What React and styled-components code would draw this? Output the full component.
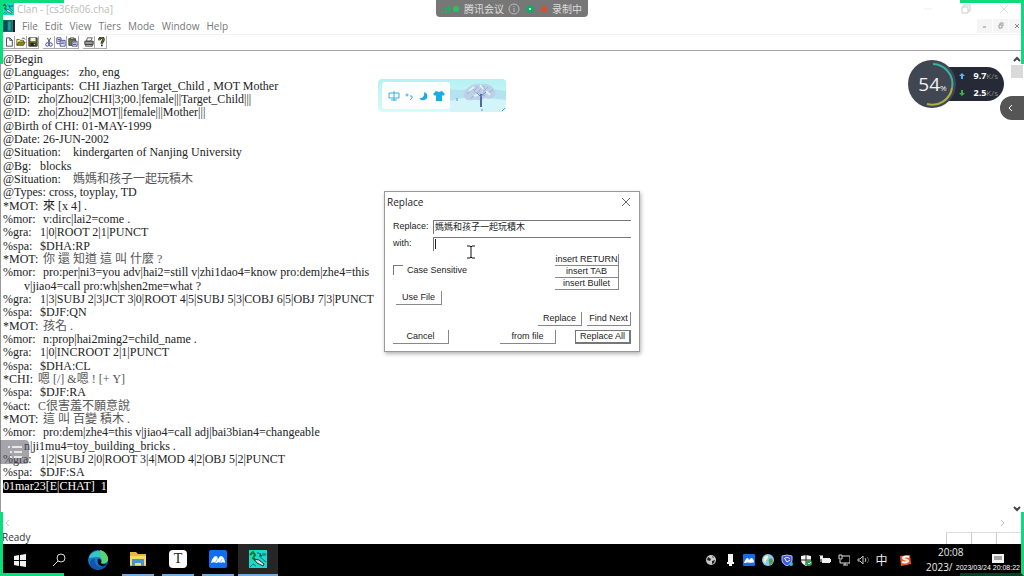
import React, { useState } from "react";
import styled, { createGlobalStyle } from "styled-components";

const GlobalStyle = createGlobalStyle`
  * {
    box-sizing: border-box;
  }
  body {
    margin: 0;
    background: #fff;
    font-family: "Open Sans", "Noto Sans CJK SC", sans-serif;
  }
  button, input {
    font: inherit;
    color: inherit;
    border: none;
    border-radius: 0;
    background: none;
    padding: 0;
    margin: 0;
    outline: none;
  }
`;

const menus = ["File", "Edit", "View", "Tiers", "Mode", "Window", "Help"];

// tab: width of the tag column, cont: continuation of the line above
const lines = [
  { tag: "@Begin" },
  { tag: "@Languages:", tab: 76, text: "zho, eng" },
  { tag: "@Participants:", tab: 76, text: "CHI Jiazhen Target_Child , MOT Mother" },
  { tag: "@ID:", tab: 35, text: "zho|Zhou2|CHI|3;00.|female|||Target_Child|||" },
  { tag: "@ID:", tab: 35, text: "zho|Zhou2|MOT||female|||Mother|||" },
  { tag: "@Birth of CHI:", tab: 79, text: "01-MAY-1999" },
  { tag: "@Date:", tab: 40, text: "26-JUN-2002" },
  { tag: "@Situation:", tab: 70, text: "kindergarten of Nanjing University" },
  { tag: "@Bg:", tab: 37, text: "blocks" },
  { tag: "@Situation:", tab: 70, text: "媽媽和孩子一起玩積木", zh: true },
  { tag: "@Types:", tab: 46, text: "cross, toyplay, TD" },
  { tag: "*MOT:", tab: 40, text: "來 [x 4] ." },
  { tag: "%mor:", tab: 40, text: "v:dirc|lai2=come ." },
  { tag: "%gra:", tab: 37, text: "1|0|ROOT 2|1|PUNCT" },
  { tag: "%spa:", tab: 37, text: "$DHA:RP" },
  { tag: "*MOT:", tab: 40, text: "你 還 知道 這 叫 什麼 ?", zh: true },
  { tag: "%mor:", tab: 40, text: "pro:per|ni3=you adv|hai2=still v|zhi1dao4=know pro:dem|zhe4=this" },
  { cont: true, text: "v|jiao4=call pro:wh|shen2me=what ?" },
  { tag: "%gra:", tab: 37, text: "1|3|SUBJ 2|3|JCT 3|0|ROOT 4|5|SUBJ 5|3|COBJ 6|5|OBJ 7|3|PUNCT" },
  { tag: "%spa:", tab: 37, text: "$DJF:QN" },
  { tag: "*MOT:", tab: 40, text: "孩名 .", zh: true },
  { tag: "%mor:", tab: 40, text: "n:prop|hai2ming2=child_name ." },
  { tag: "%gra:", tab: 37, text: "1|0|INCROOT 2|1|PUNCT" },
  { tag: "%spa:", tab: 37, text: "$DHA:CL" },
  { tag: "*CHI:", tab: 35, text: "嗯 [/] &嗯 ! [+ Y]", zh: true },
  { tag: "%spa:", tab: 37, text: "$DJF:RA" },
  { tag: "%act:", tab: 35, text: "C很害羞不願意說", zh: true },
  { tag: "*MOT:", tab: 40, text: "這 叫 百變 積木 .", zh: true },
  { tag: "%mor:", tab: 40, text: "pro:dem|zhe4=this v|jiao4=call adj|bai3bian4=changeable" },
  { cont: true, text: "n|ji1mu4=toy_building_bricks ." },
  { tag: "%gra:", tab: 37, text: "1|2|SUBJ 2|0|ROOT 3|4|MOD 4|2|OBJ 5|2|PUNCT" },
  { tag: "%spa:", tab: 37, text: "$DJF:SA" },
];

const toolGroups = [
  [
    ["New", <path key="a" d="M3 1h4l3 3v7H3zM7 1v3h3" fill="#fff" stroke="#333" />],
    ["Open", (
      <g key="b">
        <path d="M1 10V3h3l1 1h4v2" fill="#fff3a0" stroke="#5d5a10" />
        <path d="M1 10l2-4h8l-2 4z" fill="#8a8a20" stroke="#4c4c10" />
        <path d="M7 2c1-1 3-1 4 1" fill="none" stroke="#333" />
      </g>
    )],
    ["Save", (
      <g key="c">
        <path d="M1 1h10v10H1z" fill="#6b6b1e" stroke="#222" />
        <path d="M3 1h6v4H3z" fill="#f2f2f2" />
        <path d="M3 7h6v4H3z" fill="#222" />
        <path d="M7 8h1v2H7z" fill="#fff" />
      </g>
    )],
  ],
  [
    ["Cut", (
      <g key="d" fill="none">
        <path d="M4 1l3 6M8 1L5 7" stroke="#333" />
        <circle cx="4" cy="9" r="2" stroke="#25258c" />
        <circle cx="8" cy="9" r="2" stroke="#25258c" />
      </g>
    )],
    ["Copy", (
      <g key="e" fill="#fff" stroke="#34348c">
        <path d="M1 1h5v7H1zM2 3h3M2 5h3" />
        <path d="M5 4h6v7H5zM6 6h4M6 8h4" />
      </g>
    )],
    ["Paste", (
      <g key="f">
        <path d="M1 2h8v8H1z" fill="#77773c" stroke="#333" />
        <path d="M3 1h4v2H3z" fill="#ddd" stroke="#444" />
        <path d="M5 5h6v6H5zM6 7h4M6 9h4" fill="#fff" stroke="#34348c" />
      </g>
    )],
  ],
  [
    ["Print", (
      <g key="g">
        <path d="M4 1h6L8 5H3z" fill="#fff" stroke="#444" />
        <path d="M1 5h10v4H1z" fill="#999" stroke="#222" />
        <path d="M2 9h8v2H2z" fill="#ddd" stroke="#333" />
      </g>
    )],
    ["About", (
      <g key="h" fill="none">
        <path d="M4 4c0-4 5-4 5-1 0 2-2 2-2 5" stroke="#222" strokeWidth="3" />
        <path d="M4 4c0-4 5-4 5-1 0 2-2 2-2 5" stroke="#a8a820" />
        <path d="M6 9h2v2H6z" fill="#222" />
      </g>
    )],
  ],
];

const Svg = ({ size = 12, box = size, children, label }) => (
  <svg width={size} height={size} viewBox={`0 0 ${box} ${box}`} aria-label={label} aria-hidden={!label}>
    {children}
  </svg>
);

const MeetingMark = ({ size }) => (
  <Svg size={size} box={18}>
    <rect width="18" height="18" rx="2" fill="#0f6ff0" />
    <path d="M2 13c1-4 3-7 5-7 1 0 2 2 2 3 1-2 2-3 3-3 2 0 4 3 4 7-2-1-3-1-4 0-2-1-3-1-4 0-2-1-4-1-6 0z" fill="#fff" />
    <path d="M6 13l3-5M11 13l2-4" stroke="#8fc3ff" fill="none" />
  </Svg>
);

const ClanMark = ({ size }) => (
  <Svg size={size} box={18}>
    <rect width="18" height="18" fill="#17dccb" />
    <path d="M1 5l3-3 2 3-2 3 3 3" fill="none" stroke="#0c7a2a" strokeWidth="2" />
    <path d="M8 3h2M11 3v3h2M14 3v3M16 6V3" stroke="#075c60" />
    <path d="M5 9l5 1 5 4-1 2-6-3z" fill="#d9e4e2" stroke="#19393c" />
    <path d="M1 17l3-3 3 2M10 6l7 6" stroke="#0b6a70" fill="none" />
  </Svg>
);

const tray = [
  ["Network globe", (
    <g key="1">
      <circle cx="6" cy="6" r="5" fill="#c9c9c9" />
      <path d="M3 3l3 2-1 2-3-1zM7 7l3-1-1 3-2 1zM7 2l2 1-1 1z" fill="#222" />
    </g>
  )],
  ["Microphone", <path key="2" d="M4 0h5v8H4zM3 8h7v2H8v2H5v-2H3z" fill="#f4f4f4" />],
  ["Meeting", (
    <g key="3">
      <rect width="12" height="12" rx="1" fill="#0f6ff0" />
      <path d="M1 9c1-3 2-5 4-5l1 2 2-2c2 0 3 2 3 5-2-1-3 0-4 0-2-1-3 0-6 0z" fill="#fff" />
    </g>
  )],
  ["Browser", (
    <g key="4">
      <circle cx="6" cy="6" r="6" fill="#8fc7e8" />
      <path d="M2 3c3-3 5-1 4 1s-3 2-2 5C1 9 1 5 2 3z" fill="#e8f3d8" />
      <path d="M7 5c3-1 4 0 4 2s-2 4-4 4c1-2-1-4 0-6z" fill="#4f9c55" />
    </g>
  )],
  ["Manager", (
    <g key="5">
      <path d="M1 2l5-1 5 1v4c0 3-2 4-5 6-3-2-5-3-5-6z" fill="#3d55e0" stroke="#b9c4ff" />
      <path d="M3 5c1-2 5-2 6 0M4 5l2 3 3-2" stroke="#fff" fill="none" />
      <circle cx="10" cy="10" r="2" fill="#38b8d8" />
    </g>
  )],
  ["Security", (
    <g key="6">
      <path d="M1 2l5-1 5 1v4c0 3-2 4-5 6-3-2-5-3-5-6z" fill="#f4f4f4" />
      <path d="M6 1v10M1 6h10" stroke="#222" />
      <circle cx="9" cy="9" r="3" fill="#28a14a" />
      <path d="M8 9l1 1 2-2" stroke="#fff" fill="none" />
    </g>
  )],
  ["Battery", (
    <g key="7">
      <path d="M3 4h8v5H3z" fill="#eee" />
      <path d="M11 5h1v3h-1zM1 2h3v3H1z" fill="#eee" />
      <path d="M1 1v1M3 1v1M2 5v3" stroke="#eee" />
    </g>
  )],
  ["Display", (
    <g key="8" fill="none" stroke="#ddd">
      <path d="M4 2h8v7H2V6M5 11h5M7 9v2" />
      <path d="M1 1h3v4H1z" />
    </g>
  )],
  ["Volume", (
    <g key="9" fill="none" stroke="#ccc">
      <path d="M1 5h2l3-3v8L3 7H1z" />
      <path d="M8 4c1 1 1 3 0 4" />
      <path d="M10 3c2 2 2 4 0 6" stroke="#666" />
    </g>
  )],
];

const App = () => {
  const [find, setFind] = useState("媽媽和孩子一起玩積木");
  const [replacement, setReplacement] = useState("");
  const [caseSensitive, setCaseSensitive] = useState(false);

  return (
    <Screen>
      <GlobalStyle />
      <TitleBar>
        <ClanMark size={12} />
        <Title>Clan - [cs36fa06.cha]</Title>
        <WindowBtns>
          <button aria-label="Minimize"><Svg size={10}><path d="M1 5h8" stroke="#eee" /></Svg></button>
          <button aria-label="Restore"><Svg size={10}><path d="M1 3h6v6H1zM3 3V1h6v6H7" fill="none" stroke="#ccc" /></Svg></button>
          <button aria-label="Close"><Svg size={10}><path d="M1 1l8 8M9 1L1 9" stroke="#ddd" /></Svg></button>
        </WindowBtns>
      </TitleBar>
      <MenuBar>
        <Svg size={12} box={14}>
          <path d="M0 0h11v14H0z" fill="#0d6f70" />
          <path d="M1 1h4v12H1z" fill="#0a4a52" />
          <path d="M6 2h3v10H6z" fill="#2b9c98" />
          <path d="M11 0h3v14h-3z" fill="#17232b" />
        </Svg>
        {menus.map((name) => (
          <MenuItem key={name}>{name}</MenuItem>
        ))}
        <ChildBtns>
          <button aria-label="Minimize document"><Svg size={8}><path d="M2 5h3" stroke="#888" /></Svg></button>
          <button aria-label="Restore document"><Svg size={8}><path d="M2 3h3v3H2zM3 3V1h3v3" fill="none" stroke="#999" /></Svg></button>
          <button aria-label="Close document"><Svg size={8}><path d="M2 2l4 4M6 2L2 6" stroke="#888" /></Svg></button>
        </ChildBtns>
      </MenuBar>
      <ToolBar>
        {toolGroups.map((group, i) => (
          <ToolGroup key={i}>
            {group.map(([label, icon]) => (
              <ToolBtn key={label} aria-label={label}>
                <Svg size={10} box={12}>{icon}</Svg>
              </ToolBtn>
            ))}
          </ToolGroup>
        ))}
      </ToolBar>

      <Editor>
        <Document role="textbox" aria-label="Transcript" aria-multiline="true">
          {lines.map((line, i) => (
            <Line key={i} $cont={line.cont}>
              {line.tag && <Tag $tab={line.tab}>{line.tag}</Tag>}
              {line.text && <Text $zh={line.zh}>{line.text}</Text>}
            </Line>
          ))}
          <Line>
            <Mode>01mar23[E|CHAT]{"  "}1</Mode>
          </Line>
        </Document>
        <ScrollBar>
          <button aria-label="Scroll up"><Svg size={8}><path d="M1 6l3-3 3 3" fill="none" stroke="#444" strokeWidth="2" /></Svg></button>
          <Thumb />
          <button aria-label="Scroll down"><Svg size={8}><path d="M1 2l3 3 3-3" fill="none" stroke="#444" strokeWidth="2" /></Svg></button>
        </ScrollBar>
      </Editor>
      <HScroll>
        <button aria-label="Scroll left"><Svg size={8}><path d="M5 1L2 4l3 3" fill="none" stroke="#ccc" /></Svg></button>
        <button aria-label="Scroll right"><Svg size={8}><path d="M3 1l3 3-3 3" fill="none" stroke="#bbb" /></Svg></button>
      </HScroll>
      <StatusBar>
        <span>Ready</span>
        <Panes>
          <i />
          <i />
          <i />
        </Panes>
      </StatusBar>

      <TaskBar>
        <TaskBtn $narrow aria-label="Start">
          <Svg size={14}><path d="M1 3l5-1v5H1zM7 2l6-1v6H7zM1 8h5v5l-5-1zM7 8h6v6l-6-1z" fill="#f2f2f2" /></Svg>
        </TaskBtn>
        <TaskBtn $narrow aria-label="Search">
          <Svg size={14}><circle cx="9" cy="5" r="4" fill="none" stroke="#ddd" /><path d="M6 8l-5 5" stroke="#ddd" /></Svg>
        </TaskBtn>
        <TaskBtn aria-label="Edge">
          <Svg size={20}>
            <circle cx="10" cy="10" r="10" fill="#1678cf" />
            <path d="M1 8C3-1 18-2 20 9c0 4-4 5-7 4 2-3 0-6-4-6-3 0-6 1-8 1z" fill="#37c6c0" />
            <path d="M12 0c5 1 8 5 8 9 0 4-4 5-7 4 2-2 1-4 0-5z" fill="#5ad46c" />
            <path d="M7 9c-1 5 3 9 10 8-4 4-12 4-15-2-1-5 3-7 5-6z" fill="#1156a8" />
            <path d="M10 9c2-1 4 2 3 4 2 2 5 1 6 0-1 3-4 4-6 3-3-1-4-4-3-7z" fill="#061018" />
          </Svg>
        </TaskBtn>
        <TaskBtn $open aria-label="File Explorer">
          <Svg size={18}>
            <path d="M1 2h6l2 2h8v12H1z" fill="#e9b93a" />
            <path d="M1 6h16v9H1z" fill="#f9d96c" />
            <path d="M3 16V9h12v7h-3v-3H6v3z" fill="#4a93cf" />
          </Svg>
        </TaskBtn>
        <TaskBtn $open aria-label="Typora"><Typora>T</Typora></TaskBtn>
        <TaskBtn $open aria-label="Meeting"><MeetingMark size={18} /></TaskBtn>
        <TaskBtn $active aria-label="Clan"><ClanMark size={18} /></TaskBtn>
        <Tray>
          {tray.map(([label, icon]) => (
            <TrayBtn key={label} aria-label={label}><Svg size={12}>{icon}</Svg></TrayBtn>
          ))}
          <TrayBtn>中</TrayBtn>
          <TrayBtn $wide aria-label="Sogou">
            <Svg size={12}>
              <path d="M1 2l10-1 1 9-10 2z" fill="#ee5a24" />
              <path d="M10 3C7 2 4 3 4 4c0 2 5 1 5 3 0 1-3 2-6 1" fill="none" stroke="#fff" strokeWidth="2" />
            </Svg>
          </TrayBtn>
          <Clock>
            <Time>20:08</Time>
            <span>2023/</span>
          </Clock>
          <TrayBtn $wide aria-label="Notifications">
            <Svg size={14}><path d="M1 1h12v9h-2v3l-3-3H1z" fill="#f4f4f4" /><path d="M3 4h8M3 6h8" stroke="#555" /></Svg>
          </TrayBtn>
        </Tray>
      </TaskBar>

      <Dialog role="dialog" aria-label="Replace">
        <DialogHead>
          <span>Replace</span>
          <button aria-label="Close dialog"><Svg size={10}><path d="M1 1l8 8M9 1L1 9" stroke="#666" /></Svg></button>
        </DialogHead>
        <DialogBody>
          <Field>
            <label htmlFor="find">Replace:</label>
            <input id="find" value={find} onChange={(e) => setFind(e.target.value)} />
          </Field>
          <Field>
            <label htmlFor="with">with:</label>
            <Caret />
            <input id="with" value={replacement} onChange={(e) => setReplacement(e.target.value)} />
          </Field>
          <Options>
            <Check>
              <input
                type="checkbox"
                checked={caseSensitive}
                onChange={(e) => setCaseSensitive(e.target.checked)}
              />
              Case Sensitive
            </Check>
            <DialogBtn $w={46}>Use File</DialogBtn>
            <Inserts>
              <DialogBtn $w={64} $flat>insert RETURN</DialogBtn>
              <DialogBtn $w={64} $flat>insert TAB</DialogBtn>
              <DialogBtn $w={64} $flat>insert Bullet</DialogBtn>
            </Inserts>
          </Options>
          <Actions>
            <DialogBtn $w={44}>Replace</DialogBtn>
            <DialogBtn $w={44}>Find Next</DialogBtn>
          </Actions>
          <Actions $spread>
            <DialogBtn $w={56}>Cancel</DialogBtn>
            <DialogBtn $w={56}>from file</DialogBtn>
            <DialogBtn $w={56} $primary>Replace All</DialogBtn>
          </Actions>
        </DialogBody>
      </Dialog>
      <Pointer>
        <Svg size={14}><path d="M3 1h3l1 1 1-1h3M7 2v10M3 13h3l1-1 1 1h3" fill="none" stroke="#111" /></Svg>
      </Pointer>

      <MeetingBar>
        <Svg size={20}>
          <path d="M2 12h2v2H2zM5 9h2v5H5zM8 6h2v8H8z" fill="#20b05a" />
          <circle cx="16" cy="10" r="3" fill="#20c85c" />
        </Svg>
        <span>腾讯会议</span>
        <Svg size={12}><circle cx="6" cy="6" r="5" fill="none" stroke="#bbb" /><path d="M6 3v1M6 5v4" stroke="#bbb" /></Svg>
        <Svg size={12}><circle cx="6" cy="6" r="4" fill="#17a768" /><circle cx="6" cy="6" r="1" fill="#fff" /></Svg>
        <Svg size={8}><circle cx="4" cy="4" r="3" fill="#e2492f" /></Svg>
        <span>录制中</span>
      </MeetingBar>

      <ImeBar>
        <ImeTools>
          <Svg size={12}><path d="M1 3h10v5H1zM6 1v10M3 10h6" fill="none" stroke="#2cb5df" /></Svg>
          <Svg size={8}><circle cx="2" cy="3" r="1" fill="none" stroke="#2cb5df" /><path d="M5 4h2v2L5 8" fill="none" stroke="#2cb5df" /></Svg>
          <Svg size={10}><path d="M6 1c3 1 4 3 3 6-2 3-6 3-8 0 3 1 6-2 5-6z" fill="#1bade0" /></Svg>
          <Svg size={12}><path d="M3 1l3 1 3-1 3 3-2 2-1-1v6H3V5L2 6 0 4z" fill="#1bade0" /></Svg>
        </ImeTools>
        <svg width="56" height="33" viewBox="0 0 56 33" aria-hidden="true">
          <path d="M0 10l10 1 20-3 26 4v12H0z" fill="#b4e2ef" />
          <path d="M0 22c14-5 34-4 56-1v12H0z" fill="#d3f4f8" />
          <path d="M14 16c1-7 9-12 17-11 9-1 14 4 14 9 1 5-5 7-10 5-5 4-11 1-12 2-6 1-9-1-9-5z" fill="#bcd0e6" />
          <path d="M17 15l6-5 4 5 6-8 5 7 5-3M21 19l7-5 7 3M28 7l-4 5M38 8l-5 5" stroke="#9db5d6" fill="none" />
          <path d="M19 12l5-4M24 17l5-2M36 12l4 4M30 6l3 4" stroke="#e6f0f8" strokeWidth="2" fill="none" />
          <path d="M31 15v13" stroke="#506aa8" strokeWidth="2" fill="none" />
          <path d="M31 18l-4-4M31 17l5-4" stroke="#6f8abd" fill="none" />
          <path d="M7 22v-3M31 31h2M52 32l3-3" stroke="#6c8fc0" fill="none" />
        </svg>
      </ImeBar>

      <NetWidget>
        <Gauge>
          <b>54</b>
          <small>%</small>
          <svg width="48" height="48" viewBox="0 0 48 48" aria-hidden="true">
            <path d="M25 4a20 20 0 0 1 19 24" fill="none" stroke="#37b3a0" strokeWidth="2" />
            <path d="M44 28a20 20 0 0 1-25 16" fill="none" stroke="#a9b24a" strokeWidth="2" />
          </svg>
        </Gauge>
        <Speeds>
          <Speed><Svg size={8}><path d="M4 1l3 3H5v3H3V4H1z" fill="#58b4f0" /></Svg><b>9.7</b><span>K/s</span></Speed>
          <Speed><Svg size={8}><path d="M4 7L1 4h2V1h2v3h2z" fill="#3fae49" /></Svg><b>2.5</b><span>K/s</span></Speed>
        </Speeds>
      </NetWidget>
      <Handle aria-label="Expand panel"><Svg size={10}><path d="M6 2L3 5l3 3" fill="none" stroke="#fff" /></Svg></Handle>
      <ListBtn aria-label="Outline">
        <Svg size={16}><path d="M1 3h2M5 3h10M3 8h2M7 8h8M3 13h2M7 13h8" stroke="#e8e8e8" strokeWidth="2" /></Svg>
      </ListBtn>

      <Corner $top $left />
      <Corner $top />
      <Corner $left />
      <Corner $dim />
      <Stamp>2023/03/24 20:08:22</Stamp>
    </Screen>
  );
};

export default App;

const Screen = styled.div`
  position: relative;
  display: flex;
  flex-direction: column;
  min-height: 100vh;
  overflow: hidden;
  background: #fff;
`;

const TitleBar = styled.header`
  display: flex;
  align-items: center;
  gap: 3px;
  height: 18px;
  padding: 0 15px 0 2px;
`;
const Title = styled.span`
  font-size: 10px;
  color: #bbb;
`;
const WindowBtns = styled.div`
  display: flex;
  gap: 28px;
  margin-left: auto;

  button {
    display: flex;
  }
`;
const MenuBar = styled.nav`
  display: flex;
  align-items: center;
  gap: 7px;
  height: 17px;
  padding-left: 3px;
  border-bottom: 1px solid #f3f3f3;
`;
const MenuItem = styled.button`
  font-size: 10px;
  color: #777;
`;
const ChildBtns = styled.div`
  display: flex;
  gap: 1px;
  margin-left: auto;

  button {
    display: flex;
    align-items: center;
    justify-content: center;
    width: 15px;
    height: 14px;
    background: #f5f5f5;
  }
`;
const ToolBar = styled.div`
  display: flex;
  align-items: center;
  gap: 4px;
  height: 16px;
  padding: 1px 3px;
  border-bottom: 1px solid #a5a5a5;
`;
const ToolGroup = styled.div`
  display: flex;
`;
const ToolBtn = styled.button`
  display: flex;
  align-items: center;
  justify-content: center;
  width: 12px;
  height: 13px;
  border-right: 1px solid #aaa;
  border-bottom: 1px solid #aaa;
`;

const Editor = styled.main`
  display: flex;
  flex: 1;
  border-left: 1px solid #999;
`;
const Document = styled.div`
  flex: 1;
  display: grid;
  grid-auto-rows: 1fr;
  padding: 2px 0 22px 2px;
  font-family: "Liberation Serif", "Noto Sans CJK TC", serif;
  font-size: 12px;
  line-height: 13px;
  color: #222;
`;
const Line = styled.div`
  display: flex;
  align-items: center;
  min-height: 13px;
  padding-left: ${({ $cont }) => ($cont ? "21px" : "0")};
  white-space: pre;
`;
const Tag = styled.span`
  min-width: ${({ $tab }) => ($tab ? `${$tab}px` : "0")};
`;
const Text = styled.span`
  color: ${({ $zh }) => ($zh ? "#555" : "inherit")};
`;
const Mode = styled.span`
  background: #000;
  color: #fff;
`;
const ScrollBar = styled.div`
  display: flex;
  flex-direction: column;
  align-items: center;
  width: 14px;
  padding: 4px 0 2px;

  button {
    display: flex;
  }
`;
const Thumb = styled.div`
  width: 12px;
  height: 13px;
  margin: 2px 0 auto;
  background: #d9d9d9;
`;
const HScroll = styled.div`
  display: flex;
  align-items: center;
  justify-content: space-between;
  height: 16px;
  padding: 0 18px 0 4px;

  button {
    display: flex;
  }
`;
const StatusBar = styled.footer`
  display: flex;
  align-items: center;
  height: 13px;
  padding-left: 2px;
  font-size: 10px;
  line-height: 13px;
  color: #333;
`;
const Panes = styled.div`
  display: flex;
  margin-left: auto;
  padding-right: 3px;
  height: 12px;

  i {
    width: 25px;
    border-left: 1px solid #ccc;
    border-top: 1px solid #ddd;
  }
`;

const TaskBar = styled.footer`
  display: flex;
  height: 32px;
  background: #000;
  color: #eee;
`;
const TaskBtn = styled.button`
  display: flex;
  align-items: center;
  justify-content: center;
  width: ${({ $narrow, $open }) => ($narrow ? "39px" : $open ? "32px" : "40px")};
  margin: ${({ $open }) => ($open ? "0 4px" : "0")};
  background: ${({ $active }) => ($active ? "#262626" : "none")};
  border-bottom: ${({ $open, $active }) => ($open || $active ? "2px solid #76a9dc" : "none")};
`;
const Typora = styled.span`
  width: 18px;
  height: 18px;
  border-radius: 4px;
  background: #fff;
  color: #222;
  font: 14px/18px "Liberation Serif", serif;
`;
const Tray = styled.div`
  display: flex;
  align-items: center;
  margin-left: auto;
  padding-right: 13px;
`;
const TrayBtn = styled.button`
  display: flex;
  align-items: center;
  justify-content: center;
  width: ${({ $wide }) => ($wide ? "27px" : "19px")};
  font-size: 12px;
`;
const Clock = styled.div`
  display: flex;
  flex-direction: column;
  width: 66px;
  padding-left: 8px;
  font-size: 10px;
  line-height: 15px;
`;
const Time = styled.time`
  padding-left: 12px;
`;

const Dialog = styled.section`
  position: absolute;
  top: 191px;
  left: 384px;
  width: 256px;
  border: 1px solid #999;
  background: #fff;
  box-shadow: 1px 2px 4px rgba(0, 0, 0, 0.3);
  color: #222;
`;
const DialogHead = styled.div`
  display: flex;
  align-items: center;
  justify-content: space-between;
  height: 20px;
  padding: 0 8px 0 2px;
  font-size: 10px;

  button {
    display: flex;
  }
`;
const DialogBody = styled.div`
  display: flex;
  flex-direction: column;
  padding: 8px 8px 7px;
  font: 9px/11px "Liberation Sans", "Noto Sans CJK TC", sans-serif;
`;
const Field = styled.div`
  display: flex;
  position: relative;
  height: 14px;
  margin-bottom: 3px;

  label {
    width: 40px;
    padding-top: 1px;
  }
  input {
    flex: 1;
    min-width: 0;
    padding-left: 1px;
    border-top: 1px solid #777;
    border-left: 1px solid #777;
  }
`;
const Caret = styled.span`
  position: absolute;
  top: 2px;
  left: 42px;
  width: 1px;
  height: 10px;
  background: #222;
`;
const Options = styled.div`
  display: grid;
  grid-template-columns: 1fr auto;
  grid-template-rows: 26px 25px;
  align-items: end;
  margin-bottom: 7px;

  > button {
    margin-left: 3px;
  }
`;
const Check = styled.label`
  display: flex;
  align-items: center;
  gap: 4px;
  height: 20px;

  input {
    appearance: none;
    width: 10px;
    height: 10px;
    border-top: 1px solid #777;
    border-left: 1px solid #777;
  }
`;
const Inserts = styled.div`
  grid-area: 1 / 2 / 3 / 3;
  align-self: start;
  display: flex;
  flex-direction: column;
  padding-right: 12px;
`;
const DialogBtn = styled.button`
  width: ${({ $w }) => $w}px;
  height: ${({ $flat }) => ($flat ? "12px" : "14px")};
  border-right: 1px solid #888;
  border-bottom: 1px solid #888;
  white-space: nowrap;
  ${({ $primary }) => $primary && "border: 1px solid #777; border-width: 1px 2px 2px 1px;"}
`;
const Actions = styled.div`
  display: flex;
  justify-content: flex-end;
  gap: ${({ $spread }) => ($spread ? "19px" : "5px")};
  margin-top: ${({ $spread }) => ($spread ? "4px" : "0")};

  > :first-child {
    margin-right: ${({ $spread }) => ($spread ? "auto" : "0")};
  }
`;
const Pointer = styled.div`
  position: absolute;
  top: 242px;
  left: 464px;
`;

const MeetingBar = styled.div`
  position: absolute;
  top: 0;
  left: 436px;
  display: flex;
  align-items: center;
  gap: 4px;
  height: 17px;
  padding: 0 6px 0 4px;
  border-radius: 0 0 4px 4px;
  background: #777;
  color: #ddd;
  font-size: 10px;
`;
const ImeBar = styled.div`
  position: absolute;
  top: 79px;
  left: 378px;
  display: flex;
  width: 128px;
  height: 33px;
  border-radius: 4px;
  overflow: hidden;
  background: linear-gradient(#b5f1f3, #d6fbfa);
`;
const ImeTools = styled.div`
  display: flex;
  align-items: center;
  justify-content: center;
  gap: 5px;
  width: 68px;
  margin: 3px 0 3px 4px;
  border-radius: 3px;
  background: #fff;
`;
const NetWidget = styled.aside`
  position: absolute;
  top: 60px;
  right: 20px;
  display: flex;
  align-items: center;
`;
const Gauge = styled.div`
  position: relative;
  z-index: 1;
  display: flex;
  align-items: baseline;
  justify-content: center;
  width: 48px;
  height: 48px;
  border-radius: 50%;
  background: #404652;
  color: #f2f2f2;
  font-size: 19px;
  line-height: 48px;

  b {
    font-weight: 400;
  }
  small {
    font-size: 8px;
  }
  svg {
    position: absolute;
    inset: 0;
  }
`;
const Speeds = styled.div`
  display: flex;
  flex-direction: column;
  margin-left: -24px;
  padding: 0 6px 0 26px;
  border-radius: 17px;
  background: #252a36;
  color: #fff;
`;
const Speed = styled.div`
  display: flex;
  align-items: center;
  height: 17px;
  font-size: 9px;

  b {
    margin-left: 7px;
  }
  span {
    color: #888;
    font-size: 8px;
  }
`;
const Handle = styled.button`
  position: absolute;
  top: 96px;
  right: 0;
  display: flex;
  align-items: center;
  width: 24px;
  height: 24px;
  padding-left: 6px;
  border-radius: 12px 0 0 12px;
  background: #555;
`;
const ListBtn = styled.button`
  position: absolute;
  top: 440px;
  left: 0;
  display: flex;
  align-items: center;
  justify-content: center;
  width: 29px;
  height: 24px;
  border-radius: 0 4px 4px 0;
  background: rgba(90, 90, 100, 0.55);
`;
const Corner = styled.div`
  position: absolute;
  ${({ $top }) => ($top ? "top" : "bottom")}: 0;
  ${({ $left }) => ($left ? "left" : "right")}: 0;
  width: 64px;
  height: 64px;
  border: 0 solid #0bdc7c;
  ${({ $top }) => ($top ? "border-top-width" : "border-bottom-width")}: 3px;
  ${({ $left }) => ($left ? "border-left-width" : "border-right-width")}: 3px;
  ${({ $dim }) => $dim && "border-bottom-color: #053f25;"}
  pointer-events: none;
`;
const Stamp = styled.div`
  position: absolute;
  right: 3px;
  bottom: 3px;
  padding: 0 1px;
  background: #000;
  color: #fff;
  font: 7px/10px "Liberation Sans", sans-serif;
`;
